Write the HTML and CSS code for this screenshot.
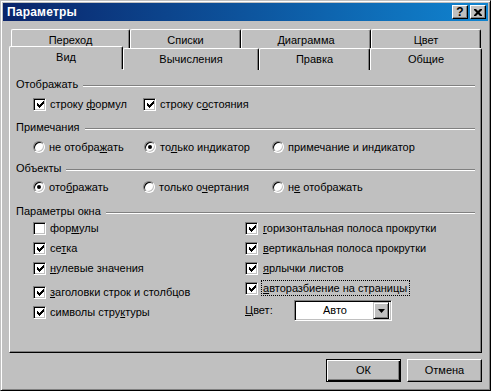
FILE: index.html
```html
<!DOCTYPE html>
<html lang="ru">
<head>
<meta charset="utf-8">
<title>Параметры</title>
<link rel="stylesheet" href="styles.css">
</head>
<body>
<div class="window">
  <div class="titlebar">
    <span class="title">Параметры</span>
    <div class="caption-btns">
      <span class="cbtn help">?</span>
      <span class="cbtn close"><svg width="8" height="7" viewBox="0 0 8 7"><path d="M0 0h2l2 2 2-2h2v1l-2.5 2.5L8 6v1H6L4 5 2 7H0V6l2.5-2.5L0 1z" fill="#000"/></svg></span>
    </div>
  </div>
  <div class="client">
    <div class="tabs">
      <div class="tabrow back">
        <div class="tab t1">Переход</div>
        <div class="tab t2">Списки</div>
        <div class="tab t3">Диаграмма</div>
        <div class="tab t4">Цвет</div>
      </div>
      <div class="tabrow front">
        <div class="tab selected t5">Вид</div>
        <div class="tab t6">Вычисления</div>
        <div class="tab t7">Правка</div>
        <div class="tab t8">Общие</div>
      </div>
    </div>
    <div class="panel">
      <div class="group-head"><span>Отображать</span><i class="groove"></i></div>
      <div class="row">
        <label class="opt w110"><span class="chk on"></span><span class="txt">строку <u>ф</u>ормул</span></label>
        <label class="opt"><span class="chk on"></span><span class="txt">строку с<u>о</u>стояния</span></label>
      </div>
      <div class="group-head gh2"><span>Примечания</span><i class="groove"></i></div>
      <div class="row">
        <label class="opt w111"><span class="rad"></span><span class="txt">не отобра<u>ж</u>ать</span></label>
        <label class="opt w128"><span class="rad on"></span><span class="txt">то<u>л</u>ько индикатор</span></label>
        <label class="opt"><span class="rad"></span><span class="txt">примечание и ин<u>д</u>икатор</span></label>
      </div>
      <div class="group-head gh3"><span>Объекты</span><i class="groove"></i></div>
      <div class="row r3">
        <label class="opt w110"><span class="rad on"></span><span class="txt">ото<u>б</u>ражать</span></label>
        <label class="opt w129"><span class="rad"></span><span class="txt">только о<u>ч</u>ертания</span></label>
        <label class="opt"><span class="rad"></span><span class="txt">н<u>е</u> отображать</span></label>
      </div>
      <div class="group-head gh4"><span>Параметры окна</span><i class="groove"></i></div>
      <div class="cols">
        <div class="col left">
          <label class="line"><span class="chk"></span><span class="txt">фор<u>м</u>улы</span></label>
          <label class="line"><span class="chk on"></span><span class="txt">се<u>т</u>ка</span></label>
          <label class="line"><span class="chk on"></span><span class="txt"><u>н</u>улевые значения</span></label>
          <label class="line gap4"><span class="chk on"></span><span class="txt"><u>з</u>аголовки строк и столбцов</span></label>
          <label class="line"><span class="chk on"></span><span class="txt">символы стру<u>к</u>туры</span></label>
        </div>
        <div class="col right">
          <label class="line"><span class="chk on"></span><span class="txt"><u>г</u>оризонтальная полоса прокрутки</span></label>
          <label class="line"><span class="chk on"></span><span class="txt"><u>в</u>ертикальная полоса прокрутки</span></label>
          <label class="line"><span class="chk on"></span><span class="txt"><u>я</u>рлычки листов</span></label>
          <label class="line"><span class="chk on"></span><span class="txt focus"><u>а</u>вторазбиение на страницы</span></label>
          <div class="combo-row">
            <span class="combo-label"><u>Ц</u>вет:</span>
            <div class="combo">
              <span class="combo-value">Авто</span>
              <span class="combo-btn"><svg width="7" height="4" viewBox="0 0 7 4"><path d="M0 0h7L3.5 4z" fill="#000"/></svg></span>
            </div>
          </div>
        </div>
      </div>
    </div>
    <div class="buttons">
      <button class="btn default">ОК</button>
      <button class="btn">Отмена</button>
    </div>
  </div>
</div>
</body>
</html>
```

FILE: styles.css
```css
* { box-sizing: border-box; }
html, body { margin: 0; padding: 0; background: #c0c0c0; }
body {
  font-family: "Liberation Sans", Arial, sans-serif;
  font-size: 11px;
  line-height: 13px;
  color: #000;
}
.window {
  width: 491px;
  height: 391px;
  background: #c0c0c0;
  border: 1px solid;
  border-color: #c0c0c0 #000 #000 #c0c0c0;
  box-shadow: inset 1px 1px #fff, inset -1px -1px #808080;
  padding: 2px;
}
.titlebar {
  height: 18px;
  background: linear-gradient(to right, #0a246a, #1084d0);
  display: flex;
  align-items: center;
  justify-content: space-between;
  padding-left: 4px;
  padding-right: 2px;
}
.title {
  color: #fff;
  font-weight: bold;
  font-size: 12px;
  letter-spacing: 0.2px;
}
.caption-btns { display: flex; gap: 2px; }
.cbtn {
  width: 16px;
  height: 14px;
  background: #c0c0c0;
  border: 1px solid;
  border-color: #fff #000 #000 #fff;
  box-shadow: inset -1px -1px #808080;
  display: flex;
  align-items: center;
  justify-content: center;
}
.cbtn.help { font-weight: bold; font-size: 12px; line-height: 12px; }
.client { padding: 8px 6px 0 6px; }
.tabs { display: flex; flex-direction: column; }
.tabrow { display: flex; }
.tabrow.back { height: 19px; margin-left: 2px; overflow: hidden; }
.tabrow.front { height: 20px; }
.tab {
  background: #c0c0c0;
  border-top: 1px solid #fff;
  border-left: 1px solid #fff;
  border-right: 1px solid #000;
  box-shadow: inset -1px 0 #808080;
  border-radius: 2px 2px 0 0;
  text-align: center;
  padding-top: 4px;
  height: 22px;
}
.tab.selected {
  position: relative;
  z-index: 2;
  margin-top: -2px;
  height: 23px;
  padding-top: 4px;
}
.t1 { width: 119px; }
.t2 { width: 111px; }
.t3 { width: 130px; }
.t4 { width: 110px; }
.t5 { width: 114px; }
.t6 { width: 136px; }
.t7 { width: 111px; }
.t8 { width: 112px; }
.panel {
  height: 285px;
  border: 1px solid;
  border-color: #fff #000 #000 #fff;
  box-shadow: inset -1px -1px #808080;
  padding: 9px 6px 0 6px;
}
.group-head {
  display: flex;
  align-items: center;
  height: 13px;
}
.groove {
  flex: 1;
  height: 2px;
  border-top: 1px solid #808080;
  border-bottom: 1px solid #fff;
  margin-left: 5px;
  margin-top: 2px;
}
.gh2 { margin-top: 4px; }
.gh3 { margin-top: 2px; }
.gh4 { margin-top: 6px; }
.row {
  display: flex;
  align-items: center;
  height: 26px;
  padding-left: 17px;
}
.row.r3 { height: 24px; }
.opt { display: flex; align-items: center; white-space: nowrap; }
.w110 { width: 110px; }
.w111 { width: 111px; }
.w128 { width: 128px; }
.w129 { width: 129px; }
.chk {
  width: 13px;
  height: 13px;
  flex: none;
  background: #fff;
  border: 1px solid;
  border-color: #808080 #fff #fff #808080;
  box-shadow: inset 1px 1px #000, inset -1px -1px #c0c0c0;
  margin-right: 2px;
  display: flex;
  align-items: center;
  justify-content: center;
}
.chk.on::after {
  content: "";
  width: 7px;
  height: 7px;
  margin: 1px 0 0 1px;
  background: url("data:image/svg+xml,%3Csvg xmlns='http://www.w3.org/2000/svg' width='7' height='7' viewBox='0 0 7 7'%3E%3Cpath d='M0 2h1v1h1v1h1v-1h1v-1h1v-1h1v-1h1v3h-1v1h-1v1h-1v1h-1v1h-1v-1h-1v-1h-1z' fill='%23000'/%3E%3C/svg%3E") no-repeat;
}
.rad {
  width: 12px;
  height: 12px;
  flex: none;
  border-radius: 50%;
  background: #fff;
  border: 1px solid;
  border-color: #808080 #fff #fff #808080;
  box-shadow: inset 1px 1px #000, inset -1px -1px #c0c0c0;
  margin-right: 2px;
  display: flex;
  align-items: center;
  justify-content: center;
}
.rad.on::after {
  content: "";
  width: 4px;
  height: 4px;
  border-radius: 50%;
  background: #000;
}
.cols { display: flex; padding-left: 17px; }
.col.left { width: 212px; }
.col { display: flex; flex-direction: column; }
.line {
  display: flex;
  align-items: center;
  height: 20px;
  white-space: nowrap;
}
.line.gap4 { margin-top: 4px; }
.col.right .chk { margin-right: 3px; }
.txt { padding: 1px 2px 0 1px; border: 1px solid transparent; white-space: pre; }
.txt.focus { border: 1px dotted #000; }
.combo-row {
  display: flex;
  align-items: center;
  margin-top: 2px;
  height: 21px;
}
.combo-label { width: 49px; }
.combo {
  width: 98px;
  height: 21px;
  background: #fff;
  border: 1px solid;
  border-color: #808080 #fff #fff #808080;
  box-shadow: inset 1px 1px #000, inset -1px -1px #c0c0c0;
  display: flex;
  align-items: center;
  padding: 2px 2px 2px 2px;
}
.combo-value { flex: 1; text-align: center; }
.combo-btn {
  width: 16px;
  height: 17px;
  background: #c0c0c0;
  border: 1px solid;
  border-color: #c0c0c0 #000 #000 #c0c0c0;
  box-shadow: inset 1px 1px #fff, inset -1px -1px #808080;
  display: flex;
  align-items: center;
  justify-content: center;
}
.buttons {
  display: flex;
  justify-content: flex-end;
  gap: 6px;
  margin-top: 6px;
}
.btn {
  width: 75px;
  height: 23px;
  font: inherit;
  color: #000;
  background: #c0c0c0;
  border: 1px solid;
  border-color: #fff #000 #000 #fff;
  box-shadow: inset -1px -1px #808080;
  padding: 0;
}
.btn.default {
  border-color: #000;
  box-shadow: inset 1px 1px #fff, inset -1px -1px #000, inset -2px -2px #808080;
}
```
